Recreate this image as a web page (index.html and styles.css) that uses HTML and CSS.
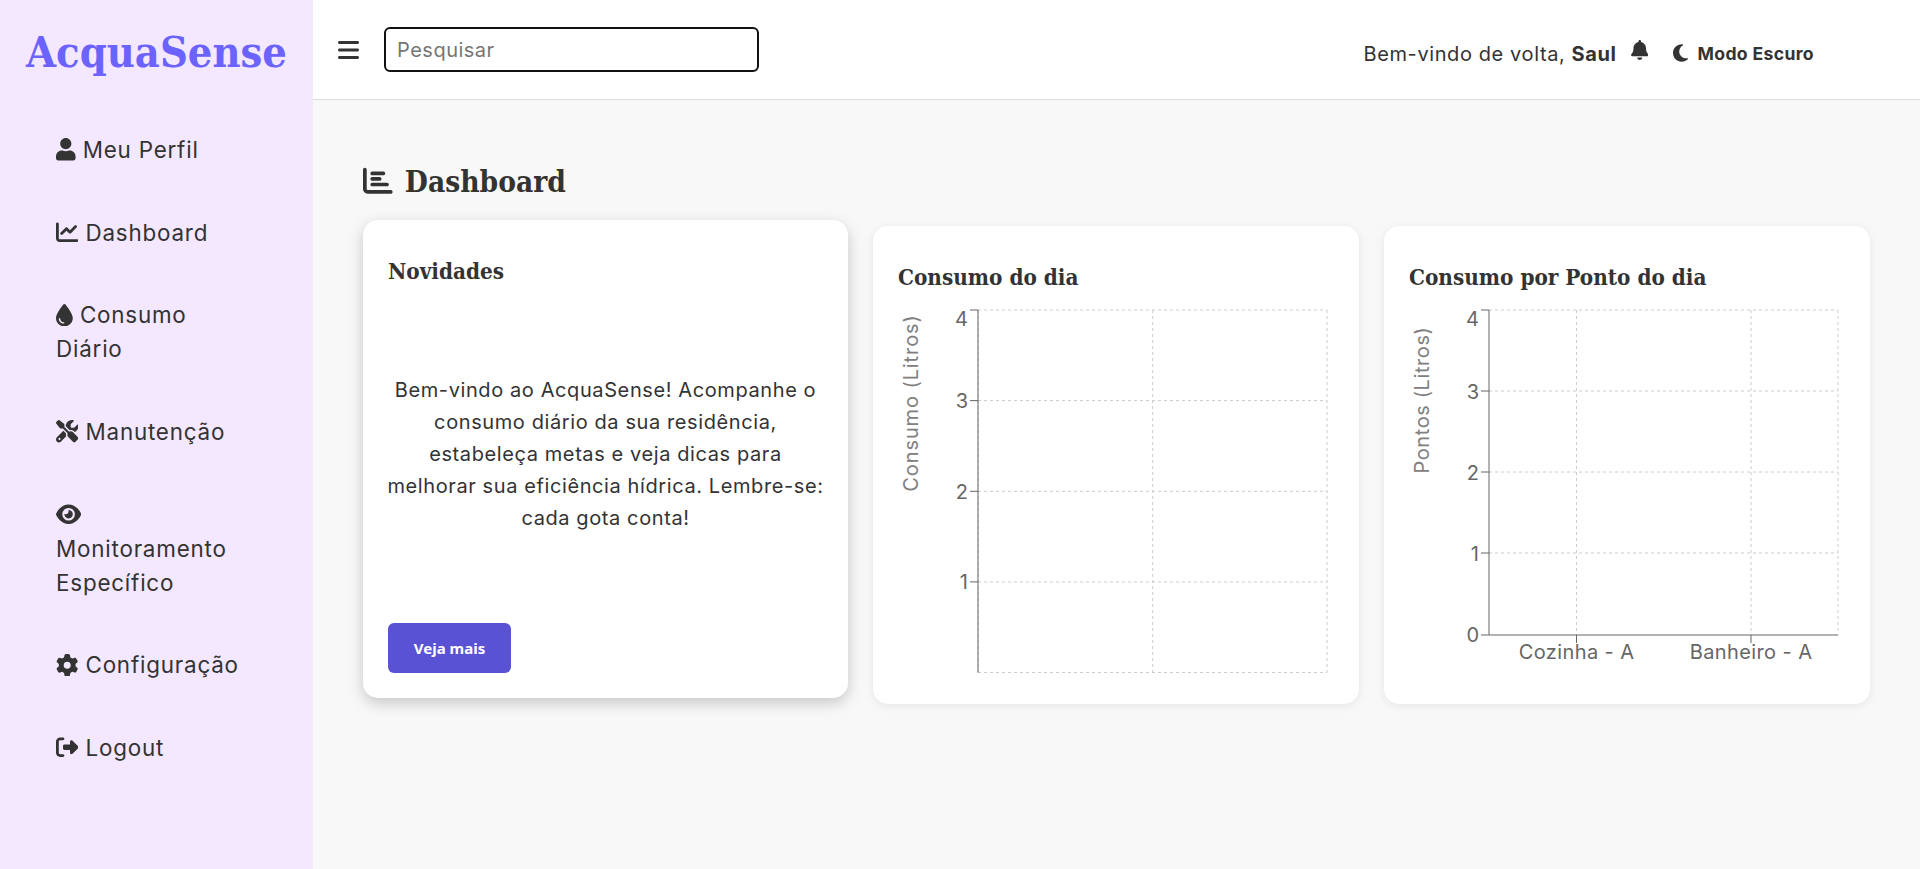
FILE: index.html
```html
<!DOCTYPE html>
<html>
	<head>
		<meta charset="UTF-8">
		<title>AcquaSense</title>
		<link rel="stylesheet" href="styles.css">
	</head>
	<body>
		<aside class="sidebar">
			<h1 class="logo">AcquaSense</h1>
			<ul class="nav">
				<li><svg class="ico" viewBox="0 0 448 512"><path d="M224 256c70.7 0 128-57.3 128-128S294.7 0 224 0 96 57.3 96 128s57.3 128 128 128zm89.6 32h-16.7c-22.2 10.2-46.9 16-72.9 16s-50.6-5.8-72.9-16h-16.7C60.2 288 0 348.2 0 422.4V464c0 26.5 21.5 48 48 48h352c26.5 0 48-21.5 48-48v-41.6c0-74.2-60.2-134.4-134.4-134.4z"/></svg> Meu Perfil</li>
				<li><svg class="ico" viewBox="0 0 512 512"><path d="M64 64c0-17.7-14.3-32-32-32S0 46.3 0 64V400c0 44.2 35.8 80 80 80H480c17.7 0 32-14.3 32-32s-14.3-32-32-32H80c-8.8 0-16-7.2-16-16V64zm406.6 86.6c12.5-12.5 12.5-32.8 0-45.3s-32.8-12.5-45.3 0L320 210.7l-57.4-57.4c-12.5-12.5-32.8-12.5-45.3 0l-112 112c-12.5 12.5-12.5 32.8 0 45.3s32.8 12.5 45.3 0L240 221.3l57.4 57.4c12.5 12.5 32.8 12.5 45.3 0l128-128z"/></svg> Dashboard</li>
				<li><svg class="ico" viewBox="0 0 384 512"><path d="M192 512C86 512 0 426 0 320C0 228.8 130.2 57.7 166.6 11.7C172.6 4.2 181.5 0 191.1 0h1.8c9.6 0 18.5 4.2 24.5 11.7C253.8 57.7 384 228.8 384 320c0 106-86 192-192 192zM96 336c0-8.8-7.2-16-16-16s-16 7.2-16 16c0 61.9 50.1 112 112 112c8.8 0 16-7.2 16-16s-7.2-16-16-16c-44.2 0-80-35.8-80-80z"/></svg> Consumo<br>Diário</li>
				<li><svg class="ico" viewBox="0 0 512 512"><path d="M78.6 5C69.1-2.4 55.6-1.5 47 7L7 47c-8.5 8.5-9.4 22-2.1 31.6l80 104c4.5 5.9 11.6 9.4 19 9.4h54.1l109 109c-14.7 29-10 65.4 14.3 89.6l112 112c12.5 12.5 32.8 12.5 45.3 0l64-64c12.5-12.5 12.5-32.8 0-45.3l-112-112c-24.2-24.2-60.6-29-89.6-14.3l-109-109V104c0-7.5-3.5-14.5-9.4-19L78.6 5zM19.9 396.1C7.2 408.8 0 426.1 0 444.1C0 481.6 30.4 512 67.9 512c18 0 35.3-7.2 48-19.9L233.7 374.3c-7.8-20.9-9-43.6-3.6-65.1l-61.7-61.7L19.9 396.1zM512 144c0-10.5-1.1-20.7-3.2-30.5c-2.4-11.2-16.1-14.1-24.2-6l-63.9 63.9c-3 3-7.1 4.7-11.3 4.7H352c-8.8 0-16-7.2-16-16V102.6c0-4.2 1.7-8.3 4.7-11.3l63.9-63.9c8.1-8.1 5.2-21.8-6-24.2C388.7 1.1 378.5 0 368 0C288.5 0 224 64.5 224 144l0 .8 85.3 85.3c36-9.1 75.8 .5 104 28.7L429 274.5c49-23 83-72.8 83-130.5zM56 432a24 24 0 1 1 48 0 24 24 0 1 1 -48 0z"/></svg> Manutenção</li>
				<li><svg class="ico" viewBox="0 0 576 512"><path d="M288 32c-80.8 0-145.5 36.8-192.6 80.6C48.6 156 17.3 208 2.5 243.7c-3.3 7.9-3.3 16.7 0 24.6C17.3 304 48.6 356 95.4 399.4C142.5 443.2 207.2 480 288 480s145.5-36.8 192.6-80.6c46.8-43.5 78.1-95.4 93-131.1c3.3-7.9 3.3-16.7 0-24.6c-14.9-35.7-46.2-87.7-93-131.1C433.5 68.8 368.8 32 288 32zM144 256a144 144 0 1 1 288 0 144 144 0 1 1 -288 0zm144-64c0 35.3-28.7 64-64 64c-7.1 0-13.9-1.2-20.3-3.3c-5.5-1.8-11.9 1.6-11.7 7.4c.3 6.9 1.3 13.8 3.2 20.7c13.7 51.2 66.4 81.6 117.6 67.9s81.6-66.4 67.9-117.6c-11.1-41.5-47.8-69.4-88.6-71.1c-5.8-.2-9.2 6.1-7.4 11.7c2.1 6.4 3.3 13.2 3.3 20.3z"/></svg><br>Monitoramento<br>Específico</li>
				<li><svg class="ico" viewBox="0 0 512 512"><path d="M495.9 166.6c3.2 8.7 .5 18.4-6.4 24.6l-43.3 39.4c1.1 8.3 1.7 16.8 1.7 25.4s-.6 17.1-1.7 25.4l43.3 39.4c6.9 6.2 9.6 15.9 6.4 24.6c-4.4 11.9-9.7 23.3-15.8 34.3l-4.7 8.1c-6.6 11-14 21.4-22.1 31.2c-5.9 7.2-15.7 9.6-24.5 6.8l-55.7-17.7c-13.4 10.3-28.2 18.9-44 25.4l-12.5 57.1c-2 9.1-9 16.3-18.2 17.8c-13.8 2.3-28 3.5-42.5 3.5s-28.7-1.2-42.5-3.5c-9.2-1.5-16.2-8.7-18.2-17.8l-12.5-57.1c-15.8-6.5-30.6-15.1-44-25.4L83.1 425.9c-8.8 2.8-18.6 .3-24.5-6.8c-8.1-9.8-15.5-20.2-22.1-31.2l-4.7-8.1c-6.1-11-11.4-22.4-15.8-34.3c-3.2-8.7-.5-18.4 6.4-24.6l43.3-39.4C64.6 273.1 64 264.6 64 256s.6-17.1 1.7-25.4L22.4 191.2c-6.9-6.2-9.6-15.9-6.4-24.6c4.4-11.9 9.7-23.3 15.8-34.3l4.7-8.1c6.6-11 14-21.4 22.1-31.2c5.9-7.2 15.7-9.6 24.5-6.8l55.7 17.7c13.4-10.3 28.2-18.9 44-25.4l12.5-57.1c2-9.1 9-16.3 18.2-17.8C227.3 1.2 241.5 0 256 0s28.7 1.2 42.5 3.5c9.2 1.5 16.2 8.7 18.2 17.8l12.5 57.1c15.8 6.5 30.6 15.1 44 25.4l55.7-17.7c8.8-2.8 18.6-.3 24.5 6.8c8.1 9.8 15.5 20.2 22.1 31.2l4.7 8.1c6.1 11 11.4 22.4 15.8 34.3zM256 336a80 80 0 1 0 0-160 80 80 0 1 0 0 160z"/></svg> Configuração</li>
				<li><svg class="ico" viewBox="0 0 512 512"><path d="M377.9 105.9L500.7 228.7c7.2 7.2 11.3 17.1 11.3 27.3s-4.1 20.1-11.3 27.3L377.9 406.1c-6.4 6.4-15 9.9-24 9.9c-18.7 0-33.9-15.2-33.9-33.9l0-62.1-128 0c-17.7 0-32-14.3-32-32l0-64c0-17.7 14.3-32 32-32l128 0 0-62.1c0-18.7 15.2-33.9 33.9-33.9c9 0 17.6 3.6 24 9.9zM160 96L96 96c-17.7 0-32 14.3-32 32l0 256c0 17.7 14.3 32 32 32l64 0c17.7 0 32 14.3 32 32s-14.3 32-32 32l-64 0c-53 0-96-43-96-96L0 128C0 75 43 32 96 32l64 0c17.7 0 32 14.3 32 32s-14.3 32-32 32z"/></svg> Logout</li>
			</ul>
		</aside>

		<div class="page">
			<header class="topbar">
				<svg class="ico bars" viewBox="0 0 448 512"><path d="M0 96C0 78.3 14.3 64 32 64H416c17.7 0 32 14.3 32 32s-14.3 32-32 32H32C14.3 128 0 113.7 0 96zM0 256c0-17.7 14.3-32 32-32H416c17.7 0 32 14.3 32 32s-14.3 32-32 32H32c-17.7 0-32-14.3-32-32zM448 416c0 17.7-14.3 32-32 32H32c-17.7 0-32-14.3-32-32s14.3-32 32-32H416c17.7 0 32 14.3 32 32z"/></svg>
				<input class="search" type="text" placeholder="Pesquisar">
				<div class="user">
					<span class="welcome">Bem-vindo de volta, <b>Saul</b></span>
					<svg class="ico bell" viewBox="0 0 448 512"><path d="M224 0c-17.7 0-32 14.3-32 32V51.2C119 66 64 130.6 64 208v18.8c0 47-17.3 92.4-48.5 127.6l-7.4 8.3c-8.4 9.4-10.4 22.9-5.3 34.4S19.4 416 32 416H416c12.6 0 24-7.4 29.2-18.9s3.1-25-5.3-34.4l-7.4-8.3C401.3 319.2 384 273.9 384 226.8V208c0-77.4-55-142-128-156.8V32c0-17.7-14.3-32-32-32zm45.3 493.3c12-12 18.7-28.3 18.7-45.3H224 160c0 17 6.7 33.3 18.7 45.3s28.3 18.7 45.3 18.7s33.3-6.7 45.3-18.7z"/></svg>
					<span class="dark">
						<svg class="ico moon" viewBox="0 0 384 512"><path d="M223.5 32C100 32 0 132.3 0 256S100 480 223.5 480c60.6 0 115.5-24.2 155.8-63.4c5-4.9 6.3-12.5 3.1-18.7s-10.1-9.7-17-8.5c-9.8 1.7-19.8 2.6-30.1 2.6c-96.9 0-175.5-78.8-175.5-176c0-65.8 36-123.1 89.3-153.3c6.1-3.5 9.2-10.5 7.7-17.3s-7.3-11.9-14.3-12.5c-6.3-.5-12.6-.8-19-.8z"/></svg>
						Modo Escuro
					</span>
				</div>
			</header>

			<main class="content">
				<h2 class="title">
					<svg class="ico" viewBox="0 0 512 512"><path d="M32 32c17.7 0 32 14.3 32 32V400c0 8.8 7.2 16 16 16H480c17.7 0 32 14.3 32 32s-14.3 32-32 32H80c-44.2 0-80-35.8-80-80V64C0 46.3 14.3 32 32 32zm96 96c0-17.7 14.3-32 32-32l192 0c17.7 0 32 14.3 32 32s-14.3 32-32 32l-192 0c-17.7 0-32-14.3-32-32zm32 64H288c17.7 0 32 14.3 32 32s-14.3 32-32 32H160c-17.7 0-32-14.3-32-32s14.3-32 32-32zm0 96H416c17.7 0 32 14.3 32 32s-14.3 32-32 32H160c-17.7 0-32-14.3-32-32s14.3-32 32-32z"/></svg>
					Dashboard
				</h2>
				<div class="cards">
					<section class="card news">
						<h3>Novidades</h3>
						<p>Bem-vindo ao AcquaSense! Acompanhe o<br>consumo diário da sua residência,<br>estabeleça metas e veja dicas para<br>melhorar sua eficiência hídrica. Lembre-se:<br>cada gota conta!</p>
						<button class="more">Veja mais</button>
					</section>

					<section class="card">
						<h3>Consumo do dia</h3>
						<svg class="chart" viewBox="0 0 436 374">
							<g class="grid">
								<path d="M80 5H429M80 95.6H429M80 186.3H429M80 276.9H429M80 367.5H429"/>
								<path d="M80 5V367.5M254.7 5V367.5M429 5V367.5"/>
							</g>
							<g class="axis">
								<path d="M80 5V367.5"/>
								<path d="M72 5H80M72 95.6H80M72 186.3H80M72 276.9H80"/>
							</g>
							<text class="tick" x="70" y="21">4</text>
							<text class="tick" x="70" y="103">3</text>
							<text class="tick" x="70" y="194">2</text>
							<text class="tick" x="70" y="284">1</text>
							<text class="label" transform="translate(20 98) rotate(-90)">Consumo (Litros)</text>
						</svg>
					</section>

					<section class="card">
						<h3>Consumo por Ponto do dia</h3>
						<svg class="chart" viewBox="0 0 436 374">
							<g class="grid">
								<path d="M80 5H429M80 86H429M80 167H429M80 248H429"/>
								<path d="M167.5 5V330M342 5V330M429 5V330"/>
							</g>
							<g class="axis">
								<path d="M80 5V330H429"/>
								<path d="M72 5H80M72 86H80M72 167H80M72 248H80M72 330H80M167.5 330V338M342 330V338"/>
							</g>
							<text class="tick" x="70" y="21">4</text>
							<text class="tick" x="70" y="94">3</text>
							<text class="tick" x="70" y="175">2</text>
							<text class="tick" x="70" y="256">1</text>
							<text class="tick" x="70" y="337">0</text>
							<text class="tick mid" x="167.5" y="354">Cozinha - A</text>
							<text class="tick mid" x="342" y="354">Banheiro - A</text>
							<text class="label short" transform="translate(20 95) rotate(-90)">Pontos (Litros)</text>
						</svg>
					</section>
				</div>
			</main>
		</div>
	</body>
</html>
```

FILE: styles.css
```css
*{
	margin:0; padding:0;
	box-sizing:border-box;
	list-style:none;
}

html,body{
	height:100%;
}

body{
	display:flex;
	font-family:"Inter","Liberation Sans",sans-serif;
	color:#333;
	background:#f8f8f8;
	overflow:hidden;
}

.ico{
	height:1em;
	width:auto;
	fill:currentColor;
	vertical-align:-0.12em;
}

/* sidebar */
.sidebar{
	width:313px;
	flex-shrink:0;
	background:#f3e8ff;
}

.logo{
	font-family:"DejaVu Serif Condensed","DejaVu Serif",serif;
	font-stretch:condensed;
	font-size:43px;
	line-height:60px;
	margin-top:22px;
	text-align:center;
	color:#6c63ff;
}

.nav{
	display:flex;
	flex-direction:column;
	gap:48.7px;
	margin-top:51px;
	padding-left:56px;
}

.nav li{
	font-size:22.4px;
	line-height:34px;
	letter-spacing:.8px;
}

/* top bar */
.page{
	flex-grow:1;
	display:flex;
	flex-direction:column;
	min-width:0;
}

.topbar{
	height:100px;
	flex-shrink:0;
	display:flex;
	align-items:center;
	padding-left:25px;
	background:#fff;
	border-bottom:1px solid #ddd;
}

.bars{
	font-size:24px;
}

.search{
	width:375px;
	height:45px;
	margin-left:25px;
	padding:0 11px;
	border:2px solid #111;
	border-radius:6px;
	font-family:inherit;
	font-size:20px;
	letter-spacing:.5px;
	outline:none;
}

.search::placeholder{
	color:#757575;
}

.user{
	display:flex;
	align-items:center;
	margin-left:auto;
	margin-top:8px;
	padding-right:106px;
	font-size:20px;
	letter-spacing:.6px;
}

.welcome b{
	font-weight:700;
}

.bell{
	font-size:20px;
	margin-left:14px;
	margin-top:-8px;
}

.dark{
	margin-left:25px;
	font-size:17.6px;
	font-weight:700;
	letter-spacing:.35px;
}

.moon{
	font-size:20px;
	margin-right:5px;
	vertical-align:-3px;
}

/* content */
.content{
	padding:60px 50px 0;
}

.title{
	font-family:"DejaVu Serif Condensed","DejaVu Serif",serif;
	font-stretch:condensed;
	font-size:29.6px;
	line-height:44px;
}

.title .ico{
	margin-right:3px;
}

.cards{
	display:grid;
	grid-template-columns:repeat(3,1fr);
	gap:25px;
	margin-top:22px;
}

.card{
	height:478px;
	padding:25px;
	background:#fff;
	border-radius:15px;
	box-shadow:0 2px 10px rgba(0,0,0,.08);
	display:flex;
	flex-direction:column;
}

.card h3{
	font-family:"DejaVu Serif Condensed","DejaVu Serif",serif;
	font-stretch:condensed;
	font-size:22.3px;
	line-height:30px;
	margin-top:11px;
	margin-bottom:13px;
}

.news{
	transform:translateY(-6px);
	box-shadow:0 5px 15px rgba(0,0,0,.2);
}

.news p{
	margin:75px -10px 0;
	font-size:20px;
	line-height:32px;
	letter-spacing:.6px;
	text-align:center;
}

.more{
	margin-top:auto;
	align-self:flex-start;
	width:123px;
	height:50px;
	border:0;
	border-radius:6px;
	background:#5a52d5;
	color:#fff;
	font-family:"Noto Sans",sans-serif;
	font-size:15px;
	font-weight:700;
}

/* charts */
.chart{
	width:436px;
	height:374px;
}

.grid path{
	fill:none;
	stroke:#ccc;
	stroke-dasharray:3 3;
}

.axis path{
	fill:none;
	stroke:#666;
}

.tick{
	font-size:20px;
	fill:#666;
	text-anchor:end;
}

.tick.mid{
	text-anchor:middle;
	letter-spacing:.4px;
}

.label{
	font-size:20px;
	letter-spacing:.9px;
	fill:#808080;
	text-anchor:middle;
}

.label.short{
	letter-spacing:.6px;
}
```
